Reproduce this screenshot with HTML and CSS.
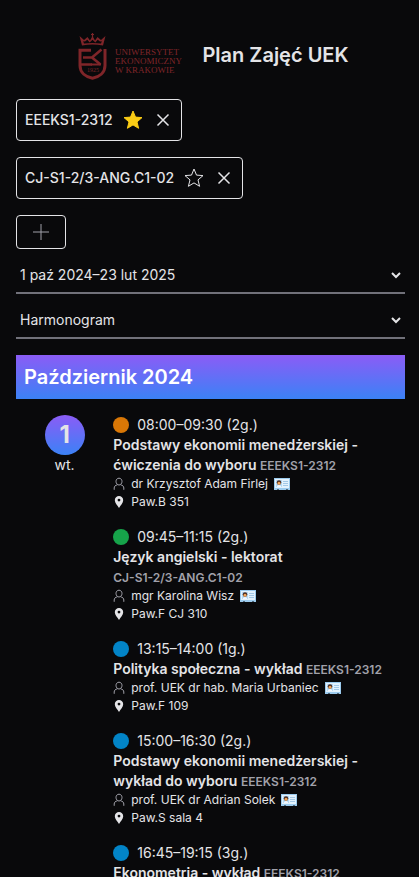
FILE: index.html
```html
<!DOCTYPE html>
<html lang="pl">
<head>
<meta charset="utf-8">
<meta name="viewport" content="width=device-width, initial-scale=1">
<title>Plan Zajęć UEK</title>
<link rel="stylesheet" href="styles.css">
</head>
<body>
<svg class="sprite" aria-hidden="true">
  <symbol id="person" viewBox="0 0 12 14">
    <path d="M6 1.2c1.9 0 3 1.5 3 3.3S7.700 8 6 8 3 6.300 3 4.500 4.100 1.200 6 1.200zM1.200 12.800V11c0-1.800 1.200-2.700 3.200-3.200M10.800 12.800V11c0-1.800-1.200-2.700-3.200-3.200" fill="none" stroke="currentColor"/>
  </symbol>
  <symbol id="pin" viewBox="0 0 12 14">
    <path fill-rule="evenodd" d="M6 1a4.200 4.200 0 0 1 4.200 4.200c0 2.800-2.700 5-4.200 7.800C4.500 10.200 1.800 8 1.800 5.200A4.200 4.200 0 0 1 6 1zm0 2.700a1.400 1.400 0 1 0 0 2.800 1.400 1.400 0 0 0 0-2.800z" fill="currentColor"/>
  </symbol>
  <symbol id="card" viewBox="0 0 16 12">
    <path d="M0 0h16v12h-2l-1-1-1 1H5l-1-1-1 1H0z" fill="#9ccbee"/>
    <path d="M1 1h14v9H1z" fill="#e3f2fd"/>
    <path d="M2 2h6v7H2z" fill="#b5daf5"/>
    <circle cx="5" cy="4.500" r="2.300" fill="#4a2c22"/>
    <circle cx="5" cy="5.200" r="1.500" fill="#f2a65a"/>
    <path d="M3 9V8l2-1 2 1v1z" fill="#f4f8ff"/>
    <path d="M9 3.500h5M9 5.500h5M9 7.500h5" stroke="#a3c8e6"/>
  </symbol>
  <symbol id="cross" viewBox="0 0 14 14">
    <path d="M1.500 1.500l11 11M12.500 1.500l-11 11" fill="none" stroke="currentColor" stroke-width="1.500"/>
  </symbol>
  <symbol id="star" viewBox="0 0 20 20">
    <path d="M10 1l2.500 6.100 6.500.5-5 4.300 1.600 6.400L10 14.900l-5.600 3.400L6 11.900 1 7.600l6.500-.5z" stroke-linejoin="round"/>
  </symbol>
</svg>

<header class="header">
  <svg class="logo" viewBox="0 0 104 50" role="img" aria-label="Uniwersytet Ekonomiczny w Krakowie">
    <g fill="none" stroke="currentColor">
      <path d="M4 15.500L1.500 6l4.500 4 3.500-3 2.500 3.500L14.500 6l2.500 4.500L19.500 7l3.500 3 4.500-4L25 15.500c-7-1.200-14-1.200-21 0z" fill="currentColor" stroke="none"/>
      <path d="M6 13.500l-.8-2.300 1.800.3 2.300-1.800 2.400 2.800 2.800-2.700 2.800 2.700 2.400-2.800 2.300 1.800 1.800-.3-.8 2.300c-5.600-.8-11.400-.8-17 0z" fill="#09090b" stroke="none"/>
      <path d="M14.500 3v4M13 4.500h3" stroke-width="1.200"/>
      <path d="M13 20.300H2v15.200C2 43 8 47 14.500 48.300 21 47 27 43 27 35.500V19" stroke-width="3"/>
      <path d="M5 27.500h9M3 34.500h11M14 27.500l9.500-8M14 27.500l8.500 7" stroke-width="2.600"/>
      <path d="M13 34.500h10" stroke-width="2"/>
    </g>
    <g class="logo-text">
      <text class="logo-year" x="9" y="42">1925</text>
      <text x="37" y="25">UNIWERSYTET</text>
      <text x="37" y="34">EKONOMICZNY</text>
      <text x="37" y="43">W KRAKOWIE</text>
    </g>
  </svg>
  <h1 class="title">Plan Zajęć UEK</h1>
</header>

<main class="main">
  <section class="groups" aria-label="Grupy">
    <div class="chip">
      <span>EEEKS1-2312</span>
      <button class="icon-button" type="button" aria-label="Usuń z ulubionych"><svg class="star star-on"><use href="#star"/></svg></button>
      <button class="icon-button" type="button" aria-label="Usuń grupę"><svg class="cross"><use href="#cross"/></svg></button>
    </div>
    <div class="chip">
      <span>CJ-S1-2/3-ANG.C1-02</span>
      <button class="icon-button" type="button" aria-label="Dodaj do ulubionych"><svg class="star"><use href="#star"/></svg></button>
      <button class="icon-button" type="button" aria-label="Usuń grupę"><svg class="cross"><use href="#cross"/></svg></button>
    </div>
    <button class="add" type="button" aria-label="Dodaj grupę"><svg class="plus" viewBox="0 0 16 16"><path d="M8 0v16M0 8h16" stroke="currentColor"/></svg></button>
  </section>

  <form class="filters">
    <div class="field">
      <select class="select" aria-label="Okres"><option>1 paź 2024–23 lut 2025</option></select>
      <svg class="chevron" viewBox="0 0 10 8"><path d="M1 2l4 4 4-4" fill="none" stroke="currentColor" stroke-width="2"/></svg>
    </div>
    <div class="field">
      <select class="select" aria-label="Widok"><option>Harmonogram</option></select>
      <svg class="chevron" viewBox="0 0 10 8"><path d="M1 2l4 4 4-4" fill="none" stroke="currentColor" stroke-width="2"/></svg>
    </div>
  </form>

  <h2 class="month">Październik 2024</h2>

  <section class="day">
    <div class="date"><span class="number">1</span><span>wt.</span></div>
    <div class="events">
      <article class="event">
        <div class="time"><span class="dot orange"></span>08:00–09:30 (2g.)</div>
        <h3 class="subject">Podstawy ekonomii menedżerskiej - ćwiczenia do wyboru <span class="group">EEEKS1-2312</span></h3>
        <div class="detail"><svg class="mark person"><use href="#person"/></svg>dr Krzysztof Adam Firlej<svg class="card"><use href="#card"/></svg></div>
        <div class="detail"><svg class="mark"><use href="#pin"/></svg>Paw.B 351</div>
      </article>
      <article class="event">
        <div class="time"><span class="dot green"></span>09:45–11:15 (2g.)</div>
        <h3 class="subject">Język angielski - lektorat <span class="group">CJ-S1-2/3-ANG.C1-02</span></h3>
        <div class="detail"><svg class="mark person"><use href="#person"/></svg>mgr Karolina Wisz<svg class="card"><use href="#card"/></svg></div>
        <div class="detail"><svg class="mark"><use href="#pin"/></svg>Paw.F CJ 310</div>
      </article>
      <article class="event">
        <div class="time"><span class="dot blue"></span>13:15–14:00 (1g.)</div>
        <h3 class="subject">Polityka społeczna - wykład <span class="group">EEEKS1-2312</span></h3>
        <div class="detail"><svg class="mark person"><use href="#person"/></svg>prof. UEK dr hab. Maria Urbaniec<svg class="card"><use href="#card"/></svg></div>
        <div class="detail"><svg class="mark"><use href="#pin"/></svg>Paw.F 109</div>
      </article>
      <article class="event">
        <div class="time"><span class="dot blue"></span>15:00–16:30 (2g.)</div>
        <h3 class="subject">Podstawy ekonomii menedżerskiej - wykład do wyboru <span class="group">EEEKS1-2312</span></h3>
        <div class="detail"><svg class="mark person"><use href="#person"/></svg>prof. UEK dr Adrian Solek<svg class="card"><use href="#card"/></svg></div>
        <div class="detail"><svg class="mark"><use href="#pin"/></svg>Paw.S sala 4</div>
      </article>
      <article class="event">
        <div class="time"><span class="dot blue"></span>16:45–19:15 (3g.)</div>
        <h3 class="subject">Ekonometria - wykład <span class="group">EEEKS1-2312</span></h3>
      </article>
    </div>
  </section>
</main>
</body>
</html>
```
FILE: styles.css
```css
* { box-sizing: border-box; }

body {
  margin: 0;
  padding: 23px 14px 0 16px;
  background: #09090b;
  color: #e4e4e7;
  font: 14px/20px Inter, sans-serif;
}

h1, h2, h3 { margin: 0; }
svg { flex: none; display: block; }
button { padding: 0; color: inherit; background: none; cursor: pointer; }
.sprite { position: absolute; width: 0; height: 0; }

.header {
  display: flex;
  align-items: center;
  justify-content: center;
  gap: 20px;
  height: 64px;
  padding-left: 6px;
}
.logo { width: 104px; height: 50px; color: #7f2529; }
.logo-text { fill: currentColor; font: 9px "Liberation Serif", serif; }
.logo-year { font-size: 6px; }
.title { font-size: 20px; line-height: 28px; font-weight: 600; }

.groups {
  display: flex;
  flex-direction: column;
  align-items: flex-start;
  gap: 16px;
  margin-top: 12px;
}
.chip {
  display: flex;
  align-items: center;
  gap: 8px;
  height: 42px;
  padding: 0 8px;
  border: 1px solid #e4e4e7;
  border-radius: 4px;
  font-weight: 500;
}
.icon-button { display: grid; place-items: center; height: 24px; border: 0; }
.star { width: 24px; height: 20px; fill: none; stroke: #e4e4e7; }
.star-on { fill: #facc15; stroke: #facc15; }
.cross { width: 20px; height: 14px; }
.add {
  display: grid;
  place-items: center;
  width: 50px;
  height: 34px;
  border: 1px solid #e4e4e7;
  border-radius: 4px;
}
.plus { width: 16px; height: 16px; color: #a1a1aa; }

.filters { display: grid; gap: 8px; margin-top: 8px; }
.field {
  display: grid;
  align-items: center;
  border-bottom: 2px solid #71717a;
}
.select, .chevron { grid-area: 1 / 1; }
.select {
  appearance: none;
  width: 100%;
  height: 35px;
  padding: 0 4px;
  border: 0;
  background: transparent;
  color: inherit;
  font: inherit;
}
.chevron { justify-self: end; width: 10px; height: 8px; margin-right: 4px; pointer-events: none; }

.month {
  margin-top: 16px;
  padding: 8px;
  background: linear-gradient(#8b5cf6, #3b82f6);
  color: #fff;
  font-size: 20px;
  line-height: 28px;
  font-weight: 600;
}

.day { display: grid; grid-template-columns: 1fr 3fr; margin-top: 16px; }
.date { display: flex; flex-direction: column; align-items: center; }
.number {
  display: grid;
  place-items: center;
  width: 40px;
  height: 40px;
  border-radius: 50%;
  background: linear-gradient(#8b5cf6, #3b82f6);
  font-size: 24px;
  font-weight: 700;
}
.events { display: grid; gap: 16px; }
.time { display: flex; align-items: center; gap: 8px; }
.dot { width: 16px; height: 16px; border-radius: 50%; }
.orange { background: #d97706; }
.green { background: #16a34a; }
.blue { background: #0284c7; }
.subject { font-size: 14px; font-weight: 600; }
.group { color: #a1a1aa; font-size: 12px; line-height: 16px; white-space: nowrap; }
.detail { display: flex; align-items: center; gap: 6px; font-size: 12px; line-height: 18px; }
.mark { width: 12px; height: 14px; }
.person { color: #a1a1aa; }
.card { width: 16px; height: 12px; }
```
